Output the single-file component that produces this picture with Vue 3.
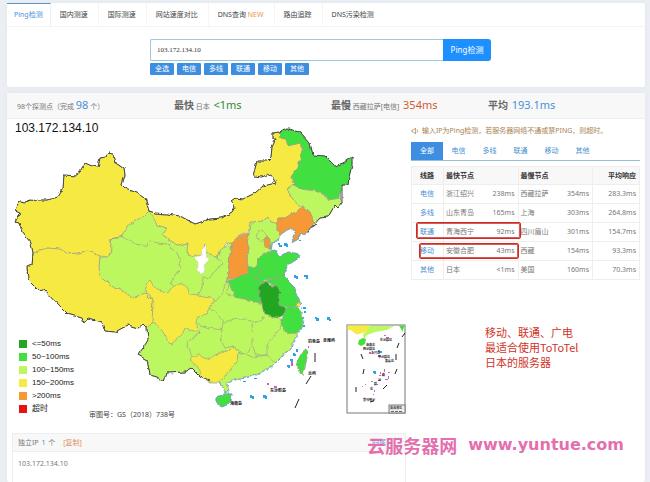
<script setup>
import { ref } from 'vue'

const navItems = [
  { label: 'Ping检测' },
  { label: '国内测速' },
  { label: '国际测速' },
  { label: '网站速度对比' },
  { label: 'DNS查询', badge: 'NEW' },
  { label: '路由追踪' },
  { label: 'DNS污染检测' },
]
const host = ref('103.172.134.10')
const lineFilters = ['全选', '电信', '多线', '联通', '移动', '其他']
const resultTabs = ['全部', '电信', '多线', '联通', '移动', '其他']
const rows = [
  ['电信', '浙江绍兴', '238ms', '西藏拉萨', '354ms', '283.3ms'],
  ['多线', '山东青岛', '165ms', '上海', '303ms', '264.8ms'],
  ['联通', '青海西宁', '92ms', '四川眉山', '301ms', '154.7ms'],
  ['移动', '安徽合肥', '43ms', '西藏', '154ms', '93.3ms'],
  ['其他', '日本', '<1ms', '美国', '160ms', '70.3ms'],
]
const legend = [
  ['deep', '<=50ms'],
  ['green', '50~100ms'],
  ['lime', '100~150ms'],
  ['yellow', '150~200ms'],
  ['orange', '>200ms'],
  ['red', '超时'],
]

const provinces = [
  // Qinghai, Gansu, Yunnan, Guizhou, Guangdong and the centre
  ['lime', '147,327 148,340 143,348 138,355 147,360 150,375 157,377 164,382 167,373 185,372 192,368 201,377 210,381 220,382 223,387 225,393 229,392 227,383 235,380 250,377 263,372 273,365 283,355 290,350 295,338 298,333 287,333 280,318 262,304 250,300 235,297 228,281 227,280 230,255 232,242 220,250 217,257 208,253 205,244 194,257 187,253 188,243 177,245 163,235 167,228 157,225 155,213 149,211 143,217 135,221 127,227 122,237 109,239 112,248 108,257 100,257 99,265 100,277 113,287 125,292 133,298 145,293 152,300 153,312 152,323'],
  // Hebei
  ['lime', '250,222 263,221 268,217 271,222 277,223 277,230 280,235 278,242 271,243 270,251 258,258 257,267 248,267 247,258 249,248 247,242 249,234'],
  // Xinjiang
  ['yellow', '16,207 20,201 25,202 31,200 35,202 38,200 47,200 58,197 63,189 64,175 77,176 85,163 92,166 98,167 100,158 106,157 108,153 113,154 115,162 124,168 125,175 122,185 125,188 137,192 145,198 149,211 143,217 135,221 127,227 122,237 109,239 112,248 108,257 100,256 88,251 78,253 68,254 60,249 47,248 33,253 31,243 22,232 19,223 15,222 20,213 15,211'],
  // Tibet
  ['yellow', '33,253 32,265 27,267 27,273 28,280 38,290 43,289 60,307 67,314 82,318 84,323 88,318 102,322 105,331 115,332 128,325 138,328 143,324 147,328 152,323 153,312 152,300 145,293 133,298 125,292 113,287 100,277 99,265 100,256 88,251 78,253 68,254 60,249 47,248'],
  // Inner Mongolia
  ['yellow', '149,211 155,213 167,214 180,216 195,224 210,219 222,218 232,212 235,207 232,201 236,198 243,199 255,193 263,186 276,183 272,177 267,174 263,177 253,176 257,161 267,161 271,157 272,147 276,139 273,139 273,133 279,132 280,138 286,139 288,146 300,143 303,148 298,167 291,177 295,183 287,189 292,198 300,207 295,212 285,218 278,218 277,223 271,222 268,217 263,221 250,222 248,233 237,237 235,243 227,243 220,250 217,257 208,253 206,255 205,244 201,255 193,257 187,253 188,243 177,245 163,235 167,228 157,225'],
  // Heilongjiang
  ['green', '279,132 288,129 300,132 310,143 313,155 325,156 335,166 343,163 352,157 352,165 349,177 348,185 342,185 340,198 329,200 325,195 315,191 300,189 293,184 295,183 291,177 298,167 303,148 300,143 288,146 286,139 280,138'],
  // Jilin
  ['lime', '340,198 342,203 338,208 335,205 328,217 320,218 314,223 310,212 303,207 300,207 292,198 287,189 293,184 300,189 315,191 325,195 329,200'],
  // Liaoning
  ['orange', '303,207 310,212 314,223 308,232 300,235 297,240 291,243 295,232 292,228 287,230 280,235 277,230 278,218 285,218 295,212'],
  // Tianjin, Shanxi
  ['orange', '267,236 270,240 270,248 265,247 264,241'],
  ['orange', '249,234 238,237 232,242 230,255 227,280 238,277 248,273 247,258 249,248 247,242'],
  // Shandong
  ['green', '270,251 275,250 280,257 288,252 300,254 299,258 288,265 283,275 273,279 262,280 255,278 262,270 257,267 258,258'],
  // Henan
  ['green', '248,267 257,267 262,270 255,278 265,281 258,288 262,304 250,300 235,297 232,290 228,281 238,277 248,273'],
  // Jiangsu
  ['green', '265,281 273,279 283,275 293,285 298,297 300,302 297,306 290,308 279,305 278,295 282,293 277,287'],
  // Zhejiang
  ['green', '286,308 297,307 302,313 303,322 298,333 287,333 280,322 284,315'],
  // Shanghai
  ['yellow', '297,302 302,304 299,307 296,306'],
  // Anhui
  ['deep', '266,281 270,285 277,287 282,293 278,295 279,305 286,308 284,315 278,318 271,317 264,314 262,305 260,296 258,288'],
  // Sichuan and Chongqing
  ['yellow', '150,280 155,288 168,293 172,287 182,283 187,287 190,294 198,295 210,297 215,300 210,308 207,315 197,317 196,323 200,333 185,328 182,335 177,338 172,344 169,343 163,332 158,325 152,323 153,303 150,295 145,292 147,283'],
  // Guangxi
  ['yellow', '233,346 230,350 215,355 208,360 198,354 192,357 190,360 198,367 201,377 210,382 220,382 228,372 237,362 238,352'],
  // Hainan, Taiwan
  ['green', '216,398 223,394 232,394 231,401 223,407 216,403'],
  ['green', '306,349 308,352 305,368 303,376 298,369 297,362 302,352'],
]
const borders = [
  '109,239 122,237 135,244 145,246 150,241 158,243 167,244 178,255 181,267 173,278 170,283 173,287',
  '217,257 223,265 215,270 210,278 203,277 202,288 198,295',
  '227,280 222,294 215,302',
  '228,281 227,293 235,297',
  '200,333 187,342 190,352 192,357',
  '210,308 218,315 223,322 238,318 255,323 265,317',
  '222,322 220,338 225,348 233,346 245,355 253,345 252,324',
  '196,323 210,328 221,330',
  '253,345 255,355 267,355 267,345 277,333 281,325',
  '238,352 253,357 267,355 275,362',
  '262,230 268,237 262,241 256,237 258,233 262,230',
]
const southBorder = '147,327 148,340 143,348 138,355 147,360 150,375 157,377 164,382 167,373 185,372 192,368 201,377 210,381'
const northBorder = '147,328 143,324 138,328 128,325 115,332 105,331 102,322 88,318 84,323 82,318 67,314 60,307 43,289 38,290 28,280 27,267 32,265 33,253 31,243 22,232 19,223 15,222 20,213 15,211 16,207 20,201 25,202 31,200 35,202 38,200 47,200 58,197 63,189 64,175 77,176 85,163 92,166 98,167 100,158 106,157 108,153 113,154 115,162 124,168 125,175 122,185 125,188 137,192 145,198 149,211 155,213 167,214 180,216 195,224 210,219 222,218 232,212 235,207 232,201 236,198 243,199 255,193 263,186 276,183 272,177 267,174 263,177 253,176 257,161 267,161 271,157 272,147 276,139 273,139 273,133 279,132 288,129 300,132 310,143 313,155 325,156 335,166 343,163 352,157 352,165 349,177 348,185 342,185 342,203 338,208 335,205 328,217 320,218 308,232'
</script>

<template>
  <div class="page">
    <section class="card search-card">
      <nav class="nav">
        <a v-for="(item, i) in navItems" :key="item.label" href="#" :class="{ active: i === 0 }">
          <span>{{ item.label }} <em v-if="item.badge">{{ item.badge }}</em></span>
        </a>
      </nav>
      <form class="search" @submit.prevent>
        <div class="field">
          <input v-model="host" type="text" aria-label="IP" />
          <button type="submit">Ping检测</button>
        </div>
        <div class="filters">
          <button v-for="f in lineFilters" :key="f" type="button">{{ f }}</button>
        </div>
      </form>
    </section>

    <section class="card result-card">
      <header class="stats">
        <div>98个探测点（完成 <b class="num blue">98</b> 个）</div>
        <div><strong>最快</strong> 日本&nbsp; <b class="num dark-green">&lt;1ms</b></div>
        <div><strong>最慢</strong> 西藏拉萨[电信]&nbsp; <b class="num vermilion">354ms</b></div>
        <div><strong>平均</strong>&nbsp; <b class="num blue">193.1ms</b></div>
      </header>

      <div class="content">
        <div class="left">
          <div class="map">
            <svg viewBox="12 120 394 306" role="img" aria-label="103.172.134.10">
              <defs>
                <filter id="rough" x="-2%" y="-2%" width="104%" height="104%">
                  <feTurbulence type="fractalNoise" baseFrequency="0.16" numOctaves="2" seed="4" />
                  <feDisplacementMap in="SourceGraphic" scale="4" xChannelSelector="R" yChannelSelector="G" />
                </filter>
              </defs>
              <text class="map-title" x="15" y="132">103.172.134.10</text>
              <g filter="url(#rough)">
                <polygon v-for="(p, i) in provinces" :key="i" :class="['province', p[0]]" :points="p[1]" />
                <polygon class="void" points="206,244 202,250 201,255 194,259 198,263 198,270 201,274 205,271 204,265 209,260 206,255" />
                <polyline v-for="b in borders" :key="b" class="border" :points="b" />
                <polyline class="frontier" :points="northBorder" />
                <polyline class="frontier" :points="southBorder" />
                <polyline class="coast" points="308,232 300,235 297,240 291,243 295,232 292,228 287,230 280,235 278,242 271,243 270,251 275,250 280,257 288,252 300,254 299,258 288,265 283,275 293,285 298,297 301,302" />
                <polyline class="coast dotted" points="301,302 303,313 304,322 299,333 296,338 291,350 284,355 274,365 264,372 250,377 235,380 228,383 229,392 225,393 223,387 220,382" />
                <polygon class="coast" points="216,398 223,394 232,394 231,401 223,407 216,403" />
              </g>
              <g class="sea">
                <path d="M278 243h2v2h2v2h-3v-2h-1zM284 243h3v1h1v3h-2v-1h-2zM294 275h2v1h2v3h-2v-1h-2zM304 275h4v4h-2v-2h-2zM315 317h2v1h2v3h-3v-2h-1zM327 317h3v2h1v2h-2v-1h-2zM250 395h2v1h2v3h-2v-1h-2zM263 395h3v1h1v3h-2v-1h-2zM287 365h3v3h-2v-1h-1zM290 359h3v3h-2v-1h-1zM293 353h2v1h1v2h-3zM296 349h2v3h-2z" />
                <path d="M299 240h2v1h-2zM303 307h3v2h-3zM304 311h2v2h-2zM303 325h2v2h-2zM243 381h3v1h-3zM254 378h3v1h-3zM291 279l2 2z" />
              </g>
              <path class="island" d="M267 383h2v2h-2zM274 386h3v2h-3zM291 362h2v4h-2zM308 346h1v2h-1z" />
              <path class="dash" d="M315 353v9M311 376l-5 8M299 399l-4 9" />
              <g class="place">
                <text x="308" y="343">钓鱼岛</text>
                <text x="323" y="342">赤尾屿</text>
                <text x="308" y="375">兰屿</text>
                <text x="270" y="392">东沙群岛</text>
                <text x="230" y="405">海南岛</text>
              </g>
              <g class="inset">
                <rect x="347" y="325" width="58" height="88" />
                <path class="yellow" d="M347.500 325.500h23l-2 5-4 2-8 2-5-4-4-1z" />
                <path class="lime" d="M369 326h25l-7 4-12 2-8 3-3 4-1-5 4-3z" />
                <path class="green" d="M359 340l4-2 3 1-1 5-4 2-3-2zM399 325.500h5.500l-2 6z" />
                <path class="dash" d="M405 333l-3 4M399 343l-2 5M361 354l2 5M396 354v6M364 369l-1 5M397 369l-2 5M387 385l-4 4M356 387v5M370 402l4-1" />
                <path class="island" d="M384 335h2v1h-2zM386 337h3v1h-3zM369 352h2v2h-2zM378 355h3v2h-3zM380 372h1v2h-1zM382 374h1v2h-1zM388 372h2v1h-2zM385 379h3v1h-3zM388 376h1v3h-1zM378 380h3v1h-3zM377 384h1v1h-1zM362 386h1v1h-1zM365 384h1v1h-1zM374 390h1v2h-1zM373 394h1v1h-1zM384 369h1v3h-1zM379 375h2v1h-2zM371 381h2v1h-2z" />
                <path class="sea" d="M378 350h2v1h2v2h-3v-1h-1zM373 371h3v3h-2v-1h-1z" />
                <g class="place">
                  <text x="380" y="341">东沙群岛</text>
                  <text x="366" y="346">海南岛</text>
                  <text x="363" y="350">西沙群岛</text>
                  <text x="371" y="354">永兴岛</text>
                  <text x="378" y="358">中沙群岛</text>
                  <text x="385" y="362">黄岩岛</text>
                  <text x="382" y="376">南</text>
                  <text x="378" y="381">沙</text>
                  <text x="374" y="385">群</text>
                  <text x="370" y="390">岛</text>
                  <text x="363" y="401">曾母暗沙</text>
                </g>
                <rect class="caption-box" x="389" y="405" width="16" height="8" />
                <text class="caption" x="390" y="409">南海诸岛</text>
                <path class="scale" d="M391 411.500h12" />
              </g>
            </svg>
            <ul class="legend">
              <li v-for="l in legend" :key="l[1]"><i :class="l[0]"></i>{{ l[1] }}</li>
            </ul>
            <p class="license">审图号：GS（2018）738号</p>
          </div>
          <section class="ip-box">
            <header><span>独立IP <b>1</b> 个</span><a class="copy" href="#">[复制]</a><a class="more" href="#">归属</a></header>
            <p>103.172.134.10</p>
          </section>
        </div>

        <div class="right">
          <p class="notice">
            <svg viewBox="0 0 8 8" aria-hidden="true"><path d="M1 3h1.500L4.500 1v6L2.500 5H1zM6 2.500q1 1.500 0 3" /></svg>
            输入IP为Ping检测，若服务器网络不通或禁PING，则超时。
          </p>
          <div class="tabs" role="tablist">
            <button v-for="(t, i) in resultTabs" :key="t" type="button" role="tab" :class="{ active: i === 0 }">{{ t }}</button>
          </div>
          <div class="table-wrap">
            <table>
              <colgroup><col class="c-line" /><col class="c-name" /><col class="c-ms" /><col class="c-name" /><col class="c-ms" /><col class="c-avg" /></colgroup>
              <thead>
                <tr><th class="mid">线路</th><th colspan="2">最快节点</th><th colspan="2">最慢节点</th><th class="end">平均响应</th></tr>
              </thead>
              <tbody>
                <tr v-for="r in rows" :key="r[0]">
                  <td class="mid"><a href="#">{{ r[0] }}</a></td>
                  <td>{{ r[1] }}</td><td class="end ms">{{ r[2] }}</td>
                  <td>{{ r[3] }}</td><td class="end ms">{{ r[4] }}</td>
                  <td class="end">{{ r[5] }}</td>
                </tr>
              </tbody>
            </table>
            <span class="mark first"></span>
            <span class="mark second"></span>
          </div>
          <p class="remark">移动、联通、广电<br />最适合使用ToToTel<br />日本的服务器</p>
        </div>
      </div>
    </section>
    <div class="watermark"><span>云服务器网</span><span class="site">www.yuntue.com</span></div>
  </div>
</template>

<style>
body {
  margin: 0;
  background: #ebeff4;
}
</style>

<style scoped>
.page {
  position: relative;
  box-sizing: border-box;
  min-height: 100vh;
  padding: 3px 5px 0 7px;
  display: flex;
  flex-direction: column;
  gap: 6px;
  font: 7px/10px "Noto Sans", "Noto Sans CJK SC", sans-serif;
  color: #777;
  overflow: hidden;
}
p, ul { margin: 0; padding: 0; }
a { color: #4a8fd0; text-decoration: none; }
button, input { margin: 0; padding: 0; border: 0; font: inherit; }
.card { background: #fff; border-radius: 2px; box-shadow: 0 0 4px #dfe6ee; }
.nav { display: flex; height: 23px; border-bottom: 1px solid #f3f3f3; }
.nav a {
  display: flex;
  align-items: center;
  padding: 0 10px 0 9px;
  color: #444;
  white-space: nowrap;
}
.nav a:not(.active):not(:last-child) { border-right: 1px solid #f5f5f5; }
.nav a.active {
  padding: 0 7px;
  color: #4a90d9;
  border-top: 1px solid #5b94c2;
  border-right: 1px solid #eee;
}
.nav em { color: #e8964a; font-style: normal; }
.search { width: 341px; margin: 0 auto; padding: 12px 11px 12px 0; }
.field { display: flex; height: 22px; }
.field input {
  flex: 1;
  min-width: 0;
  box-sizing: border-box;
  padding: 0 6px;
  border: 1px solid #9cc8dc;
  border-right: 0;
  border-radius: 2px 0 0 2px;
  font: 7px "Liberation Serif", serif;
  color: #333;
  outline: 0;
}
.field button { width: 48px; background: #1e8fff; color: #fff; border-radius: 0 3px 3px 0; font-size: 8px; }
.filters { display: flex; gap: 3px; margin-top: 2px; }
.filters button { width: 24px; height: 12px; background: #3d8ee0; color: #fff; border-radius: 1px; line-height: 12px; }

.result-card { flex: 1; display: flex; flex-direction: column; }
.stats {
  display: grid;
  grid-template-columns: repeat(4, 1fr);
  padding: 0 0 0 10px;
  height: 25px;
  line-height: 24px;
  background: #f8f8f8;
  border-bottom: 1px solid #eee;
  white-space: nowrap;
}
.stats strong { font-size: 10px; color: #666; }
.num { font-size: 11px; font-weight: 400; }
.blue { color: #4a8fd4; }
.dark-green { color: #2f8a35; }
.vermilion { color: #d65a30; }
.content { flex: 1; display: grid; grid-template-columns: 394fr 229fr; gap: 5px; padding: 1px 5px 0; }
.left { display: flex; flex-direction: column; gap: 7px; }
.map { position: relative; }
.map > svg { display: block; width: 100%; }
.map-title { font: 12px "Liberation Sans", sans-serif; fill: #111; }
.province { stroke: #9a9f85; stroke-width: 0.7; stroke-linejoin: round; }
.deep { fill: #23a623; background: #23a623; }
.green { fill: #43df3f; background: #43df3f; }
.lime { fill: #bdf761; background: #bdf761; }
.yellow { fill: #f6ea43; background: #f6ea43; }
.orange { fill: #f69835; background: #f69835; }
.red { background: #e21414; }
.void { fill: #fff; stroke: #ccc; stroke-width: 0.5; }
.border { fill: none; stroke: #9da487; stroke-width: 0.7; }
.frontier { fill: none; stroke: #444; stroke-width: 1; stroke-linejoin: round; }
.coast { fill: none; stroke: #5aa9cf; stroke-width: 0.7; }
.dotted { stroke-width: 1; stroke-dasharray: 3 2; }
.sea { fill: #2ba3e0; }
.island { fill: #d95cb4; }
.dash { fill: none; stroke: #222; stroke-width: 1; }
.place text { font: 700 4px "Noto Sans CJK SC", sans-serif; fill: #111; }
.inset > rect { fill: none; stroke: #777; stroke-width: 1; }
.inset .place text { font-size: 3px; }
.inset .caption-box { fill: #eee; stroke: #777; }
.inset .caption { font: 700 3px "Noto Sans CJK SC", sans-serif; fill: #333; }
.scale { stroke: #666; stroke-dasharray: 3 1; }
.legend {
  position: absolute;
  left: 7px;
  bottom: 11px;
  list-style: none;
  font: 8px/13px "Liberation Sans", "Noto Sans CJK SC", sans-serif;
  color: #222;
}
.legend li { display: flex; align-items: center; gap: 5px; height: 13px; }
.legend i { width: 8px; height: 8px; }
.license { position: absolute; left: 77px; bottom: 6px; color: #444; }
.ip-box { flex: 1; border: 1px solid #eee; border-bottom: 0; }
.ip-box header { display: flex; gap: 8px; height: 17px; line-height: 17px; padding: 0 5px; background: #f8f8f8; border-bottom: 1px solid #eee; }
.ip-box b { color: #4a8fd4; font-weight: 400; margin: 0 1px; }
.ip-box .copy { color: #e09060; }
.ip-box .more { margin-left: auto; margin-right: 14px; }
.ip-box p { padding: 7px 5px; }

.notice { display: flex; align-items: center; gap: 3px; padding-top: 6px; color: #a98252; white-space: nowrap; }
.notice svg { width: 8px; height: 8px; fill: none; stroke: #a98252; stroke-width: 0.7; }
.tabs { display: flex; margin-top: 6px; border-bottom: 1px solid #94bfd9; }
.tabs button { width: 31px; height: 18px; background: none; color: #4a8fd0; }
.tabs .active { width: 32px; background: #3d8ee0; color: #fff; }
.table-wrap { position: relative; margin-top: 5px; }
table { width: 100%; table-layout: fixed; border-collapse: collapse; border: 1px solid #eee; }
.c-line { width: 32px; }
.c-avg { width: 47px; }
th, td { height: 17px; padding: 0 3px 0 2px; border-bottom: 1px solid #eee; text-align: left; white-space: nowrap; line-height: 10px; }
td { height: 18px; }
th { background: #f8f8f8; color: #333; border-right: 1px solid #eee; }
td:first-child, .ms { border-right: 1px solid #eee; }
.mid { text-align: center; }
.end { text-align: right; }
.mark { position: absolute; box-sizing: border-box; border: 1px solid #cc2a22; border-radius: 2px; box-shadow: 0 0 0 1px #dd5a50 inset; }
.first { left: 5px; top: 56px; width: 105px; height: 17px; }
.second { left: 8px; top: 77px; width: 100px; height: 16px; }
.remark { margin: 45px 0 0 74px; font: 11px/15px "Noto Sans CJK SC", sans-serif; color: #cf3327; }
.watermark {
  position: absolute;
  right: 26px;
  bottom: 25px;
  display: flex;
  align-items: center;
  gap: 11px;
  font: 700 18px/24px "Noto Sans CJK SC", sans-serif;
  color: #e36fae;
  white-space: nowrap;
}
.site { font: 700 16px/24px "DejaVu Sans", sans-serif; }
</style>
